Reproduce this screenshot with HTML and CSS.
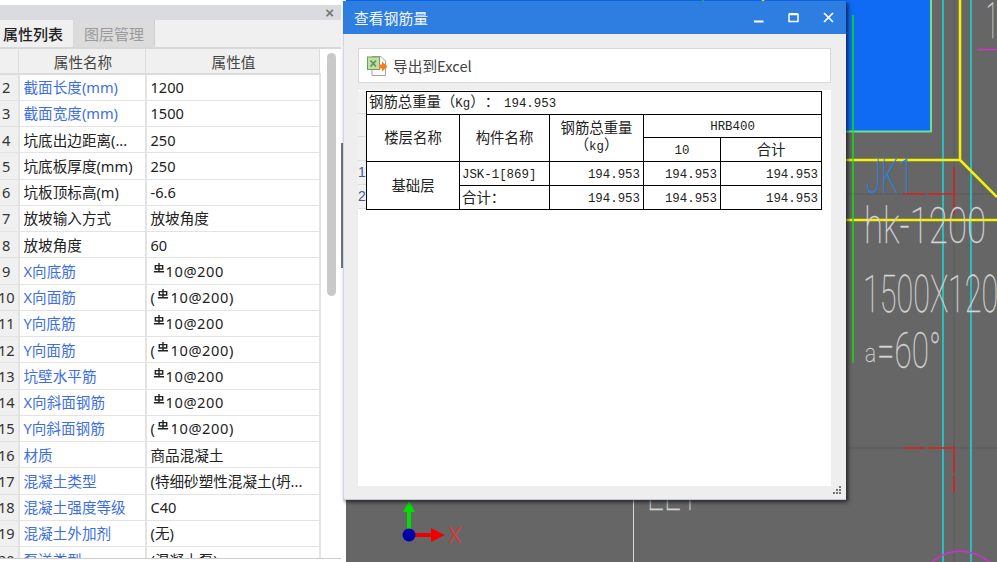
FILE: index.html
```html
<!DOCTYPE html>
<html lang="zh-CN">
<head>
<meta charset="utf-8">
<title>查看钢筋量</title>
<link rel="stylesheet" href="styles.css">
</head>
<body>
<svg class="defs" width="0" height="0" aria-hidden="true">
  <symbol id="rebar" viewBox="0 0 11 10">
    <path d="M5.5 0V8.6M1.8 2.6H9.2V6H1.8ZM0.4 8.8H10.6" fill="none" stroke="#222" stroke-width="1.4"/>
  </symbol>
</svg>
<div class="desktop">
  <aside class="panel">
    <div class="panel-title"><span class="panel-close">×</span></div>
    <div class="tabs">
      <div class="tab tab-active">属性列表</div>
      <div class="tab tab-idle">图层管理</div>
    </div>
    <div class="grid-wrap">
      <table class="props">
        <colgroup><col class="c-num"><col class="c-name"><col class="c-val"></colgroup>
        <thead><tr><th></th><th>属性名称</th><th>属性值</th></tr></thead>
        <tbody>
          <tr><td class="n">2</td><td class="link">截面长度(mm)</td><td>1200</td></tr>
          <tr><td class="n">3</td><td class="link">截面宽度(mm)</td><td>1500</td></tr>
          <tr><td class="n">4</td><td>坑底出边距离(...</td><td>250</td></tr>
          <tr><td class="n">5</td><td>坑底板厚度(mm)</td><td>250</td></tr>
          <tr><td class="n">6</td><td>坑板顶标高(m)</td><td>-6.6</td></tr>
          <tr><td class="n">7</td><td>放坡输入方式</td><td>放坡角度</td></tr>
          <tr><td class="n">8</td><td>放坡角度</td><td>60</td></tr>
          <tr><td class="n">9</td><td class="link">X向底筋</td><td class="rv"><svg class="rb"><use href="#rebar"/></svg>10@200</td></tr>
          <tr><td class="n">10</td><td class="link">X向面筋</td><td class="rv">(<svg class="rb"><use href="#rebar"/></svg>10@200)</td></tr>
          <tr><td class="n">11</td><td class="link">Y向底筋</td><td class="rv"><svg class="rb"><use href="#rebar"/></svg>10@200</td></tr>
          <tr><td class="n">12</td><td class="link">Y向面筋</td><td class="rv">(<svg class="rb"><use href="#rebar"/></svg>10@200)</td></tr>
          <tr><td class="n">13</td><td class="link">坑壁水平筋</td><td class="rv"><svg class="rb"><use href="#rebar"/></svg>10@200</td></tr>
          <tr><td class="n">14</td><td class="link">X向斜面钢筋</td><td class="rv"><svg class="rb"><use href="#rebar"/></svg>10@200</td></tr>
          <tr><td class="n">15</td><td class="link">Y向斜面钢筋</td><td class="rv">(<svg class="rb"><use href="#rebar"/></svg>10@200)</td></tr>
          <tr><td class="n">16</td><td class="link">材质</td><td>商品混凝土</td></tr>
          <tr><td class="n">17</td><td class="link">混凝土类型</td><td>(特细砂塑性混凝土(坍...</td></tr>
          <tr><td class="n">18</td><td class="link">混凝土强度等级</td><td>C40</td></tr>
          <tr><td class="n">19</td><td class="link">混凝土外加剂</td><td>(无)</td></tr>
          <tr><td class="n">20</td><td class="link">泵送类型</td><td>(混凝土泵)</td></tr>
        </tbody>
      </table>
      <div class="thumb"></div>
    </div>
  </aside>
  <div class="edge-bar"></div>

  <main class="canvas">
    <svg class="cad" width="651" height="562" viewBox="346 0 651 562">
      <rect class="blue-fill" x="346" y="0" width="585" height="131"/>
      <path class="ln green-pale" d="M931 0V131.500H846"/>
      <path class="ln faint" d="M846 194H997M846 448H997M954 0V562"/>
      <path class="ln cyan" d="M943 0V562M971 0V562"/>
      <path class="ln yellow" d="M960 0V160H846M960 160L997 197M846 220H997"/>
      <path class="ln green" d="M853 15V363"/>
      <path class="ln red" d="M903 194H925M928 194H952M954 167V215M903 448H925M928 448H952M954 446V473M954 476V493"/>
      <path class="ln magenta" d="M977 49.500H997M932 562Q959 540 990 562"/>
      <path class="ln green" d="M703 0V1"/>
      <path class="ln yellow" d="M763 0V1"/>
      <path class="ln white" d="M633.500 495V562"/>
      <text class="cad-text" x="986" y="38" font-size="50" textLength="12" lengthAdjust="spacingAndGlyphs">1</text>
      <text class="cad-text cad-blue" x="866" y="193" font-size="49" textLength="47" lengthAdjust="spacingAndGlyphs">JK1</text>
      <text class="cad-text" x="864" y="243" font-size="50" textLength="122" lengthAdjust="spacingAndGlyphs">hk-1200</text>
      <text class="cad-text" x="863" y="312" font-size="52" textLength="152" lengthAdjust="spacingAndGlyphs">1500X1200</text>
      <text class="cad-text" x="865" y="362" font-size="26" textLength="11" lengthAdjust="spacingAndGlyphs">a</text>
      <text class="cad-text" x="877" y="368" font-size="50" textLength="64" lengthAdjust="spacingAndGlyphs">=60°</text>
      <text class="cad-text" x="647" y="510" font-size="50" textLength="50" lengthAdjust="spacingAndGlyphs">EE1</text>
      <path class="axis-y" d="M407 530V512H403L409 501L415 512H411V530Z"/>
      <path class="axis-x" d="M412 533H431V528L445 535L431 542V537H412Z"/>
      <circle class="axis-o" cx="409" cy="535" r="6.500"/>
      <text class="axis-label" x="448" y="543" font-size="22">X</text>
    </svg>
  </main>

  <section class="dialog">
    <header class="dlg-title">
      <span class="dlg-name">查看钢筋量</span>
      <div class="dlg-ctrls">
        <svg class="ctrl" width="11" height="11" viewBox="0 0 11 11"><path d="M1 9.500H10.500" stroke="#fff" stroke-width="2"/></svg>
        <svg class="ctrl" width="11" height="11" viewBox="0 0 11 11"><path d="M1 2.500H10V9.500H1Z" fill="none" stroke="#fff" stroke-width="1.500"/><path d="M1 2H10" stroke="#fff" stroke-width="2"/></svg>
        <svg class="ctrl" width="11" height="11" viewBox="0 0 11 11"><path d="M1 1L10 10M10 1L1 10" stroke="#fff" stroke-width="1.700"/></svg>
      </div>
    </header>
    <div class="dlg-body">
      <div class="toolbar">
        <button class="tool-btn" type="button">
          <svg width="21" height="20" viewBox="0 0 21 20">
            <path d="M5 0.500H14L18.500 5V19.500H5Z" fill="#fafafa" stroke="#a5a5a5"/>
            <rect x="0.500" y="1" width="12" height="12.500" fill="#c4dcb0" stroke="#6f9f50"/>
            <path d="M3.500 4.500L9 10.500M9 4.500L3.500 10.500" stroke="#5b9a45" stroke-width="1.800"/>
            <path d="M12 8.500H15V5.500L20.500 10.500L15 15.500V12.500H12Z" fill="#f07f1f"/>
          </svg>
          <span>导出到Excel</span>
        </button>
      </div>
      <div class="sheet">
        <div class="rowhead">
          <div class="rh rh1"></div>
          <div class="rh rh2"></div>
          <div class="rh rh3"></div>
          <div class="rh rh4">1</div>
          <div class="rh rh5">2</div>
        </div>
        <table class="report">
          <colgroup><col class="r1"><col class="r2"><col class="r3"><col class="r4"><col class="r5"></colgroup>
          <tr class="h23"><td colspan="5" class="total">钢筋总重量（<span class="m">Kg</span>）：<span class="m gap">194.953</span></td></tr>
          <tr class="h23">
            <td rowspan="2" class="c">楼层名称</td>
            <td rowspan="2" class="c">构件名称</td>
            <td rowspan="2" class="c tall">钢筋总重量<br>（<span class="m">kg</span>）</td>
            <td colspan="2" class="c"><span class="m">HRB400</span></td>
          </tr>
          <tr class="h24">
            <td class="c"><span class="m">10</span></td>
            <td class="c">合计</td>
          </tr>
          <tr class="h24">
            <td rowspan="2" class="c">基础层</td>
            <td class="l"><span class="m">JSK-1[869]</span></td>
            <td class="r"><span class="m">194.953</span></td>
            <td class="r"><span class="m">194.953</span></td>
            <td class="r"><span class="m">194.953</span></td>
          </tr>
          <tr class="h24">
            <td class="l">合计：</td>
            <td class="r"><span class="m">194.953</span></td>
            <td class="r"><span class="m">194.953</span></td>
            <td class="r"><span class="m">194.953</span></td>
          </tr>
        </table>
      </div>
      <svg class="grip" width="11" height="11" viewBox="0 0 11 11">
        <path d="M8 1h2v2H8ZM5 4h2v2H5ZM8 4h2v2H8ZM2 7h2v2H2ZM5 7h2v2H5ZM8 7h2v2H8Z" fill="#6f7275"/>
      </svg>
    </div>
  </section>
</div>
</body>
</html>
```

FILE: styles.css
```css
* { box-sizing: border-box; }
html, body { margin: 0; padding: 0; background: #fff; }
body { width: 997px; height: 562px; overflow: hidden; font-family: "Noto Sans", "Noto Sans CJK SC", sans-serif; text-spacing-trim: space-all; }
.defs { position: absolute; }

.desktop { position: relative; display: flex; justify-content: space-between; width: 997px; height: 562px; overflow: hidden; }

/* left properties panel */
.panel { position: relative; width: 341px; height: 559px; padding-top: 5px; background: #fff; overflow: hidden; border-bottom: 1px solid #ccc; }
.panel-title { display: flex; justify-content: flex-end; align-items: center; height: 15px; padding-right: 7px; background: #d9dbde; }
.panel-close { color: #777; font: 700 15px/15px "Liberation Sans", sans-serif; }
.tabs { display: flex; height: 29px; background: #f0f0f0; border-bottom: 2px solid #d8d8d8; }
.tab { height: 27px; font-size: 15px; line-height: 28px; }
.tab-active { width: 74px; padding-left: 3px; color: #222; font-weight: 500; border-right: 1px solid #d8d8d8; }
.tab-idle { width: 81px; padding-left: 10px; color: #9a9a9a; background: #dcdcdc; border-right: 1px solid #cfcfcf; }

.grid-wrap { position: relative; }
.props { width: 327px; margin-left: -8px; table-layout: fixed; border-collapse: collapse; font-size: 14.6px; color: #222; }
.c-num { width: 26px; }
.c-name { width: 127px; }
.c-val { width: 174px; }
.props th { height: 25px; padding: 0 0 0 2px; font-weight: 400; color: #444; text-align: center; background: #f0f0f0; border: 1px solid #dcdcdc; border-top: 0; border-bottom-width: 2px; }
.props td { height: 26.25px; padding: 0 0 0 4px; white-space: nowrap; overflow: hidden; border: 1px solid #e3e3e3; border-width: 1px 2px 1px 1px; line-height: 22px; }
.props td.n { padding: 0 0 0 2px; text-align: center; background: #f0f0f0; color: #333; }
.props td.link { color: #3d6ee6; }
.props td.rv { letter-spacing: .6px; }
.rb { display: inline-block; width: 12px; height: 10px; margin: 0 1px 0 2px; vertical-align: 4px; }
.thumb { position: absolute; left: 327px; top: 4px; width: 9px; height: 243px; border-radius: 5px; background: #c9c9c9; }
.edge-bar { position: absolute; left: 341px; top: 143px; width: 2px; height: 125px; background: #6a7680; }

/* CAD canvas */
.canvas { width: 651px; height: 562px; background: #666; overflow: hidden; }
.cad { display: block; }
.blue-fill { fill: #0f6bf4; }
.ln { fill: none; stroke-width: 1.500; }
.green-pale { stroke: #6fe08a; stroke-width: 2; }
.faint { stroke: #5a5a5a; stroke-width: 1; }
.cyan { stroke: #2bbcbc; stroke-width: 2; }
.yellow { stroke: #f4f400; stroke-width: 2.500; }
.green { stroke: #10e010; stroke-width: 1.500; }
.red { stroke: #e01c1c; stroke-width: 1.500; }
.magenta { stroke: #d030d0; stroke-width: 1.500; }
.white { stroke: #d8d8d8; stroke-width: 1; }
.cad-text { font-family: Roboto, "Liberation Sans", sans-serif; font-weight: 100; fill: #d4d4d4; stroke: #d4d4d4; stroke-width: .3px; }
.cad-blue { fill: #1f80e8; stroke: #1f80e8; }
.axis-y { fill: #00e000; }
.axis-x { fill: #f00000; }
.axis-o { fill: #0000a8; }
.axis-label { font-family: Roboto, "Liberation Sans", sans-serif; font-weight: 300; fill: #f03030; }

/* floating dialog */
.dialog { position: absolute; left: 343px; top: 1px; display: flex; flex-direction: column; width: 503px; height: 499px; background: #eee; border-left: 1px solid #d0d6e2; border-bottom: 1px solid #c2c9dc; box-shadow: 2px 2px 4px rgba(0, 0, 0, .65); }
.dlg-title { display: flex; justify-content: space-between; align-items: center; flex: none; height: 33px; margin-left: -1px; padding: 0 11px; background: #2e7de0; color: #f2f6fd; font-size: 14.8px; }
.dlg-ctrls { display: flex; gap: 24px; align-items: center; padding-right: 1px; }
.ctrl { display: block; }
.dlg-body { position: relative; flex: 1; padding: 14px 15px 13px 14px; }
.toolbar { display: flex; align-items: center; height: 35px; padding-left: 6px; background: #fff; border: 1px solid #d8d8d8; }
.tool-btn { display: flex; align-items: center; gap: 5px; padding: 0 2px; border: 0; background: #fff; color: #444; font: 14.7px "Noto Sans CJK SC", sans-serif; }
.sheet { display: flex; align-items: flex-start; height: 396px; margin-top: 7px; padding-top: 1px; background: #fff; }
.rowhead { flex: none; width: 8px; background: #f1f1f1; font: 14px/23px "Liberation Sans", sans-serif; color: #4a5a8a; overflow: hidden; }
.rh { border-bottom: 1px solid #dedede; }
.rh1, .rh2 { height: 23px; }
.rh3 { height: 24px; }
.rh4, .rh5 { height: 24px; line-height: 22px; }
.report { flex: none; width: 455px; table-layout: fixed; border-collapse: collapse; font-size: 14.4px; color: #222; border: 1px solid #000; }
.r1 { width: 93px; }
.r2 { width: 90px; }
.r3 { width: 94px; }
.r4 { width: 77px; }
.r5 { width: 101px; }
.report td { padding: 0 3px; border: 1px solid #000; line-height: 20px; white-space: nowrap; overflow: hidden; }
.h23 { height: 23px; }
.h24 { height: 24px; }
.report .total { padding: 0 2px; }
.report .c { text-align: center; }
.report .l { padding: 0 2px; text-align: left; }
.report .r { text-align: right; }
.report .tall { vertical-align: top; padding-top: 4px; line-height: 17px; }
.m { font-family: "Liberation Mono", monospace; font-size: 12.400px; }
.gap { margin-left: 5px; }
.grip { position: absolute; right: 4px; bottom: 3px; }
```
